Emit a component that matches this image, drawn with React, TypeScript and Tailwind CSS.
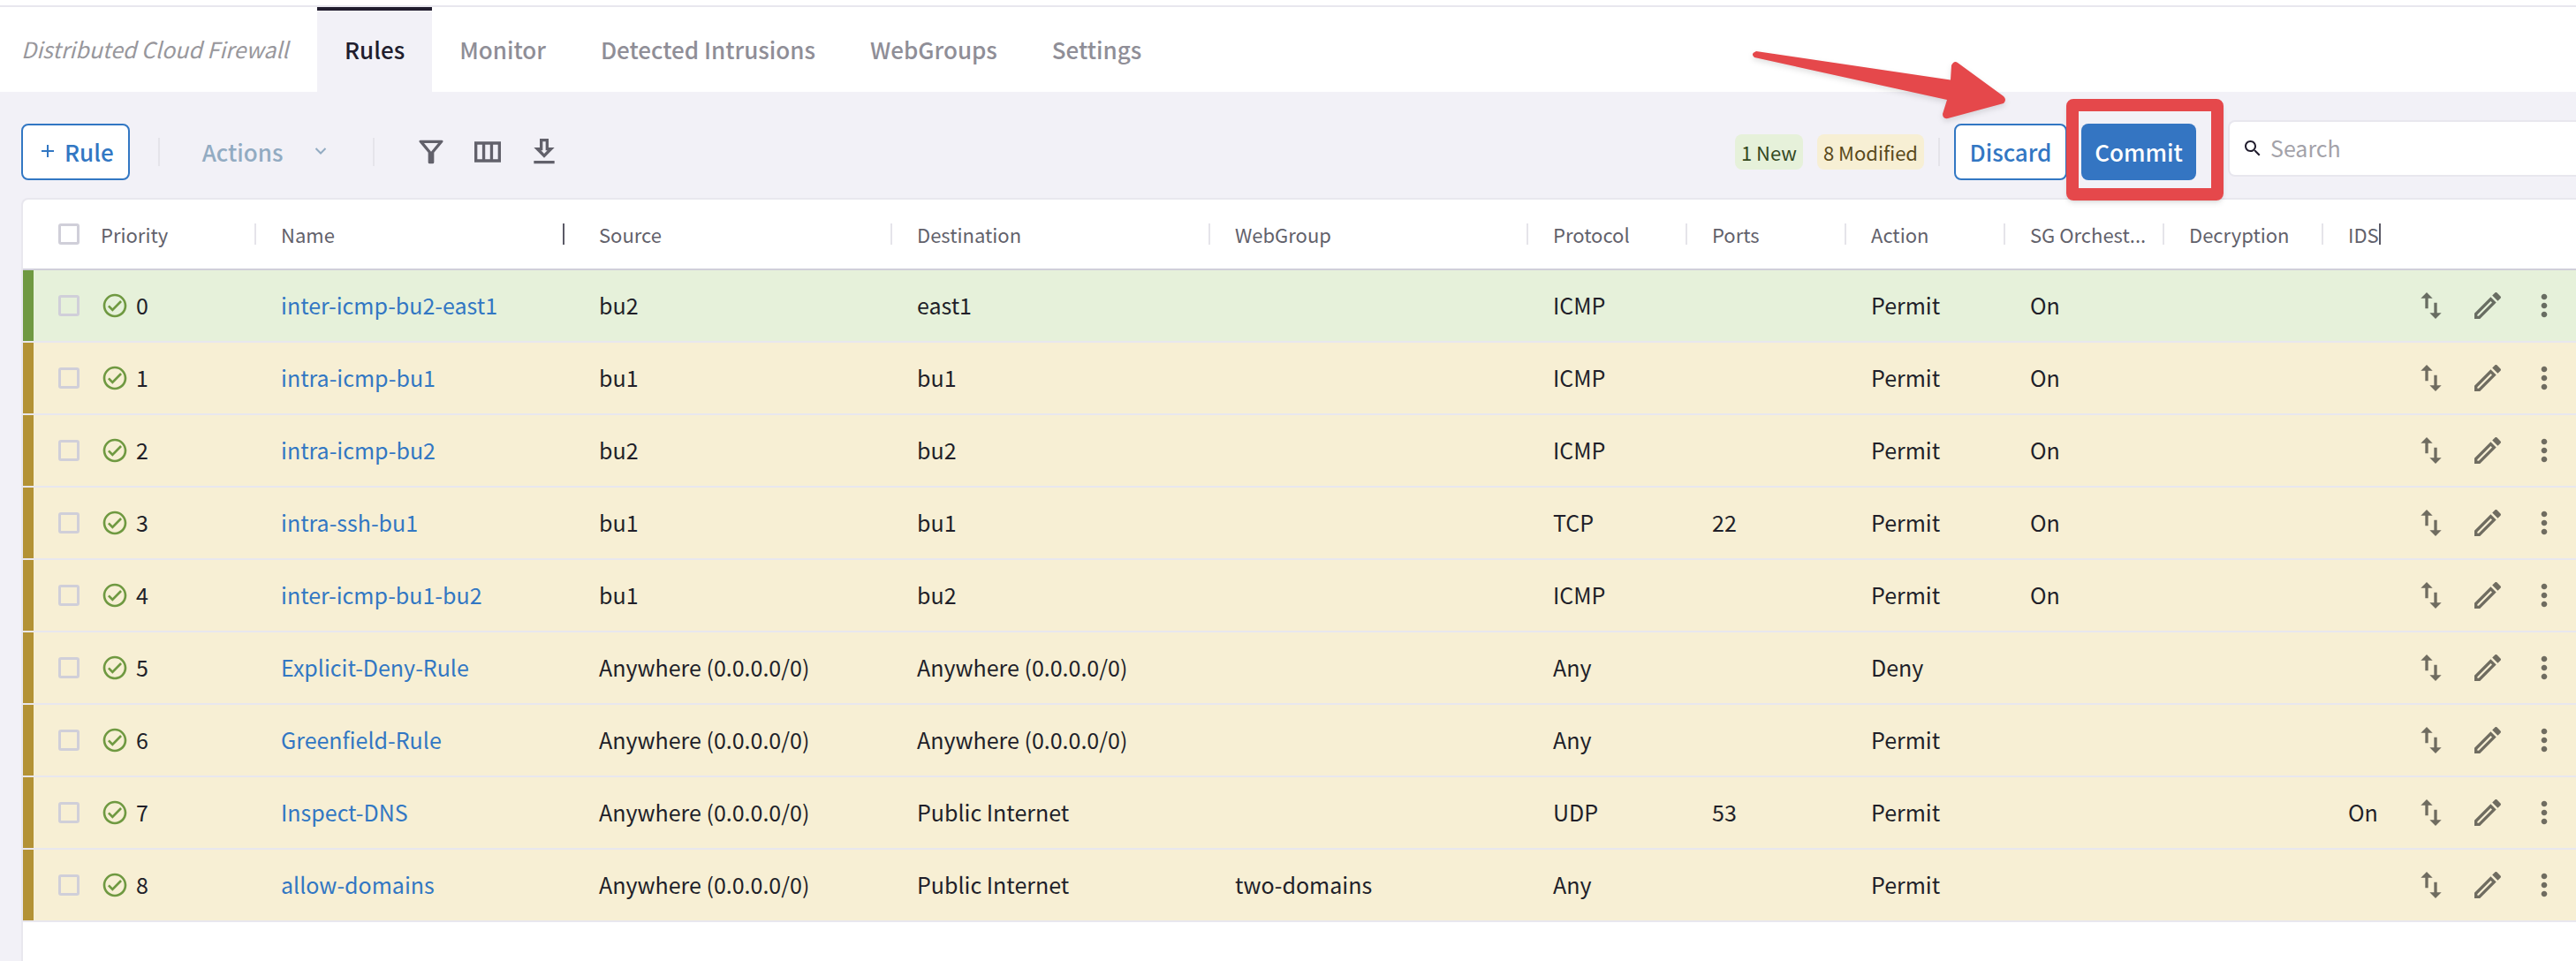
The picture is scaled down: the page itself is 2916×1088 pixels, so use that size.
import React from 'react';

type Rule = {
  name: string;
  source: string;
  destination: string;
  webGroup?: string;
  protocol: string;
  ports?: string;
  action: string;
  sg?: string;
  ids?: string;
  state: 'new' | 'modified';
};

const ANY = 'Anywhere (0.0.0.0/0)';

const rules: Rule[] = [
  { name: 'inter-icmp-bu2-east1', source: 'bu2', destination: 'east1', protocol: 'ICMP', action: 'Permit', sg: 'On', state: 'new' },
  { name: 'intra-icmp-bu1', source: 'bu1', destination: 'bu1', protocol: 'ICMP', action: 'Permit', sg: 'On', state: 'modified' },
  { name: 'intra-icmp-bu2', source: 'bu2', destination: 'bu2', protocol: 'ICMP', action: 'Permit', sg: 'On', state: 'modified' },
  { name: 'intra-ssh-bu1', source: 'bu1', destination: 'bu1', protocol: 'TCP', ports: '22', action: 'Permit', sg: 'On', state: 'modified' },
  { name: 'inter-icmp-bu1-bu2', source: 'bu1', destination: 'bu2', protocol: 'ICMP', action: 'Permit', sg: 'On', state: 'modified' },
  { name: 'Explicit-Deny-Rule', source: ANY, destination: ANY, protocol: 'Any', action: 'Deny', state: 'modified' },
  { name: 'Greenfield-Rule', source: ANY, destination: ANY, protocol: 'Any', action: 'Permit', state: 'modified' },
  { name: 'Inspect-DNS', source: ANY, destination: 'Public Internet', protocol: 'UDP', ports: '53', action: 'Permit', ids: 'On', state: 'modified' },
  { name: 'allow-domains', source: ANY, destination: 'Public Internet', webGroup: 'two-domains', protocol: 'Any', action: 'Permit', state: 'modified' },
];

const tabs = ['Rules', 'Monitor', 'Detected Intrusions', 'WebGroups', 'Settings'];
const middleColumns = ['Source', 'Destination', 'WebGroup', 'Protocol', 'Ports', 'Action', 'SG Orchest...', 'Decryption'];

const icons = {
  filter: 'M4.7 4h14.6c.8 0 1.1.8.6 1.4L14 12.5V19a1 1 0 0 1-1 1h-2a1 1 0 0 1-1-1v-6.5L4.1 5.4C3.6 4.8 3.9 4 4.7 4zM7.2 6l4.8 5.8L16.8 6z',
  columns: 'M3 5v14h18V5H3zm5.33 12H5V7h3.33v10zm5.34 0h-3.33V7h3.33v10zM19 17h-3.33V7H19v10z',
  download: 'M19 9h-4V3H9v6H5l7 7 7-7zm-8 2V5h2v6h1.17L12 13.17 9.83 11H11zm-6 7h14v2H5z',
  swap: 'M16 17.01V10h-2v7.01h-3L15 21l4-3.99h-3zM9 3L5 6.99h3V14h2V6.99h3L9 3z',
  pencil:
    'M14.06 9L15 9.94L5.92 19H5V18.08L14.06 9M17.66 3C17.41 3 17.15 3.1 16.96 3.29L15.13 5.12L18.88 8.87L20.71 7.04C21.1 6.65 21.1 6 20.71 5.63L18.37 3.29C18.17 3.09 17.92 3 17.66 3M14.06 6.19L3 17.25V21H6.75L17.81 9.94L14.06 6.19Z',
  more: 'M12 8c1.1 0 2-.9 2-2s-.9-2-2-2-2 .9-2 2 .9 2 2 2zm0 2c-1.1 0-2 .9-2 2s.9 2 2 2 2-.9 2-2-.9-2-2-2zm0 6c-1.1 0-2 .9-2 2s.9 2 2 2 2-.9 2-2-.9-2-2-2z',
  check:
    'M12 2C6.5 2 2 6.5 2 12S6.5 22 12 22 22 17.5 22 12 17.5 2 12 2M12 20C7.59 20 4 16.41 4 12S7.59 4 12 4 20 7.59 20 12 16.41 20 12 20M16.59 7.58L10 14.17L7.41 11.59L6 13L10 17L18 9L16.59 7.58Z',
  search:
    'M15.5 14h-.79l-.28-.27C15.41 12.59 16 11.11 16 9.5 16 5.91 13.09 3 9.5 3S3 5.91 3 9.5 5.91 16 9.5 16c1.61 0 3.09-.59 4.23-1.57l.27.28v.79l5 4.99L20.49 19l-4.99-5zm-6 0C7.01 14 5 11.99 5 9.5S7.01 5 9.5 5 14 7.01 14 9.5 11.99 14 9.5 14z',
};

function Icon({ name, className = 'size-10' }: { name: keyof typeof icons; className?: string }) {
  return (
    <svg viewBox="0 0 24 24" fill="currentColor" fillRule="evenodd" aria-hidden="true" className={`shrink-0 ${className}`}>
      <path d={icons[name]} />
    </svg>
  );
}

function IconButton({ name, label }: { name: keyof typeof icons; label: string }) {
  return (
    <button type="button" aria-label={label} className="flex w-16 justify-center">
      <Icon name={name} />
    </button>
  );
}

function Divider({ className = '' }: { className?: string }) {
  return <span className={`w-[2px] shrink-0 bg-[#e5e4ea] ${className}`} />;
}

function Checkbox({ label }: { label: string }) {
  return (
    <input
      type="checkbox"
      aria-label={label}
      className="ml-7 mr-6 size-6 shrink-0 appearance-none rounded-[3px] border-[3px] border-[#d0cfd9] bg-transparent"
    />
  );
}

function Header() {
  return (
    <header className="mt-1.5 border-t-2 border-[#e8e7ee] bg-white">
      <nav className="flex h-24 items-stretch pl-6 text-[26px]">
        <span className="flex w-[335px] items-center whitespace-nowrap text-[25px] italic text-[#98979c]">Distributed Cloud Firewall</span>
        {tabs.map((tab, i) => (
          <a
            key={tab}
            href="#"
            className={
              i === 0
                ? 'flex items-center border-t-4 border-[#211d2e] bg-[#f2f1f7] px-[31px] pb-1.5 font-medium text-[#211d2e]'
                : 'flex items-center whitespace-nowrap px-[31px] pb-0.5 font-medium text-[#8f8e97]'
            }
          >
            {tab}
          </a>
        ))}
      </nav>
    </header>
  );
}

// Red frame around the Commit button and the arrow that points at it.
function Callout() {
  return (
    <>
      <span className="pointer-events-none absolute -bottom-[23px] -left-[17px] -right-[31px] -top-[28px] z-10 rounded-lg border-[14px] border-[#e5484b] shadow-md" />
      <svg
        viewBox="0 0 300 90"
        aria-hidden="true"
        className="pointer-events-none absolute -left-[378px] -top-[88px] z-10 h-[90px] w-[300px] max-w-none overflow-visible drop-shadow-md"
      >
        <path
          d="M10 6L230 38.5 231 22Q234 16 238 19L290 57Q294 61 290 65L227 82Q221 83 221 77L226 61 8 13Q3 9 10 6z"
          fill="#e5484b"
        />
      </svg>
    </>
  );
}

function Toolbar() {
  return (
    <div className="flex items-start pb-5 pl-6 pt-8">
      <div className="mt-1 flex h-16 items-center">
        <button
          type="button"
          className="flex h-16 items-center gap-3 rounded-lg border-2 border-[#3277c3] bg-white pb-0.5 pl-[21px] pr-4 text-[26px] font-medium text-[#3277c3]"
        >
          <svg viewBox="0 0 14 14" className="size-3.5" fill="none" stroke="currentColor" strokeWidth="2" aria-hidden="true">
            <path d="M7 0v14M0 7h14" />
          </svg>
          Rule
        </button>
        <Divider className="ml-8 h-8" />
        <button type="button" className="ml-12 flex items-center gap-9 pb-0.5 text-[26px] font-medium text-[#92abc2]">
          Actions
          <svg viewBox="0 0 14 8" className="h-2 w-3.5" fill="none" stroke="currentColor" strokeWidth="2" aria-hidden="true">
            <path d="M1.5 1L7 6.5 12.5 1" />
          </svg>
        </button>
        <Divider className="ml-[52px] h-8" />
        <div className="ml-8 flex text-[#62616b]">
          <IconButton name="filter" label="Filter" />
          <IconButton name="columns" label="Columns" />
          <IconButton name="download" label="Download" />
        </div>
      </div>
      <div className="ml-auto mt-1 flex h-16 items-center gap-4">
        <span className="flex h-10 items-center rounded-lg bg-[#e6f1da] px-[7px] text-[22px] text-[#34491f]">1 New</span>
        <span className="flex h-10 items-center rounded-lg bg-[#f7efd4] px-[7px] text-[22px] text-[#5a4a1b]">8 Modified</span>
        <Divider className="h-8" />
        <button type="button" className="h-16 w-32 rounded-lg border-2 border-[#3277c3] bg-white pb-0.5 text-[26px] font-medium text-[#3277c3]">
          Discard
        </button>
        <div className="relative">
          <button type="button" className="h-16 w-[130px] rounded-lg bg-[#3475c2] pb-0.5 text-[26px] font-medium text-white">
            Commit
          </button>
          <Callout />
        </div>
      </div>
      <label className="ml-9 flex h-16 w-[394px] items-center gap-2 rounded-l-lg border-2 border-r-0 border-[#e8e7ee] bg-white pl-3.5">
        <Icon name="search" className="size-6 text-[#211d2e]" />
        <input
          type="search"
          aria-label="Search"
          placeholder="Search"
          className="min-w-0 flex-1 bg-transparent text-[25px] outline-none placeholder:text-[#a3a2a9]"
        />
      </label>
    </div>
  );
}

function HeadCell({ children }: { children: React.ReactNode }) {
  return (
    <th scope="col" className="border-b-2 border-[#d0cfd9] p-0 font-normal">
      <div className="flex items-center justify-between pl-7">{children}</div>
    </th>
  );
}

function Cell({ children }: { children?: React.ReactNode }) {
  return <td className="whitespace-nowrap border-b-2 border-[#e8e7ee] p-0 pl-7">{children}</td>;
}

function RulesTable() {
  return (
    <table className="w-full table-fixed border-separate border-spacing-0 text-left text-[25px] text-[#211f29]">
      <colgroup>
        <col className="w-[264px]" />
        <col />
        <col />
        <col />
        <col />
        <col className="w-[180px]" />
        <col className="w-[180px]" />
        <col className="w-[180px]" />
        <col className="w-[180px]" />
        <col className="w-[180px]" />
        <col className="w-[90px]" />
        <col className="w-[196px]" />
      </colgroup>
      <thead>
        <tr className="h-20 text-[22px] text-[#62616b]">
          <th scope="col" className="border-b-2 border-[#d0cfd9] p-0 font-normal">
            <div className="flex items-center pl-3">
              <Checkbox label="Select all rules" />
              Priority
              <Divider className="ml-auto h-6" />
            </div>
          </th>
          <HeadCell>
            Name
            <span className="mr-[11px] h-6 w-[2px] bg-[#5b5a66]" />
          </HeadCell>
          {middleColumns.map((title) => (
            <HeadCell key={title}>
              {title}
              <Divider className="h-6" />
            </HeadCell>
          ))}
          <th scope="col" className="border-b-2 border-[#d0cfd9] p-0 font-normal">
            <div className="flex items-center pl-7">
              IDS
              <span className="h-6 w-[2px] bg-[#5b5a66]" />
            </div>
          </th>
          <td className="border-b-2 border-[#d0cfd9]" />
        </tr>
      </thead>
      <tbody>
        {rules.map((rule, i) => (
          <tr key={rule.name} className={rule.state === 'new' ? 'bg-[#e6f1da]' : 'bg-[#f7efd4]'}>
            <td className="border-b-2 border-[#e8e7ee] p-0">
              <div className="flex h-20 items-center">
                <span className={rule.state === 'new' ? 'w-3 self-stretch bg-[#6f9941]' : 'w-3 self-stretch bg-[#b39235]'} />
                <Checkbox label={`Select rule ${i}`} />
                <Icon name="check" className="size-8 text-[#6f9941]" />
                <span className="ml-2">{i}</span>
              </div>
            </td>
            <Cell>
              <a href="#" className="text-[#3277c3]">
                {rule.name}
              </a>
            </Cell>
            <Cell>{rule.source}</Cell>
            <Cell>{rule.destination}</Cell>
            <Cell>{rule.webGroup}</Cell>
            <Cell>{rule.protocol}</Cell>
            <Cell>{rule.ports}</Cell>
            <Cell>{rule.action}</Cell>
            <Cell>{rule.sg}</Cell>
            <Cell />
            <Cell>{rule.ids}</Cell>
            <td className="border-b-2 border-[#e8e7ee] p-0">
              <div className="flex text-black/55">
                <IconButton name="swap" label={`Move ${rule.name}`} />
                <IconButton name="pencil" label={`Edit ${rule.name}`} />
                <IconButton name="more" label={`More actions for ${rule.name}`} />
              </div>
            </td>
          </tr>
        ))}
      </tbody>
    </table>
  );
}

export default function App() {
  return (
    <div className="flex min-h-screen flex-col bg-white font-['Noto_Sans_CJK_SC','Noto_Sans',sans-serif]">
      <Header />
      <main className="flex flex-1 flex-col bg-[#f2f1f7]">
        <Toolbar />
        <section className="ml-6 flex-1 overflow-hidden rounded-tl-lg border-l-2 border-t-2 border-[#e8e7ee] bg-white">
          <RulesTable />
        </section>
      </main>
    </div>
  );
}
